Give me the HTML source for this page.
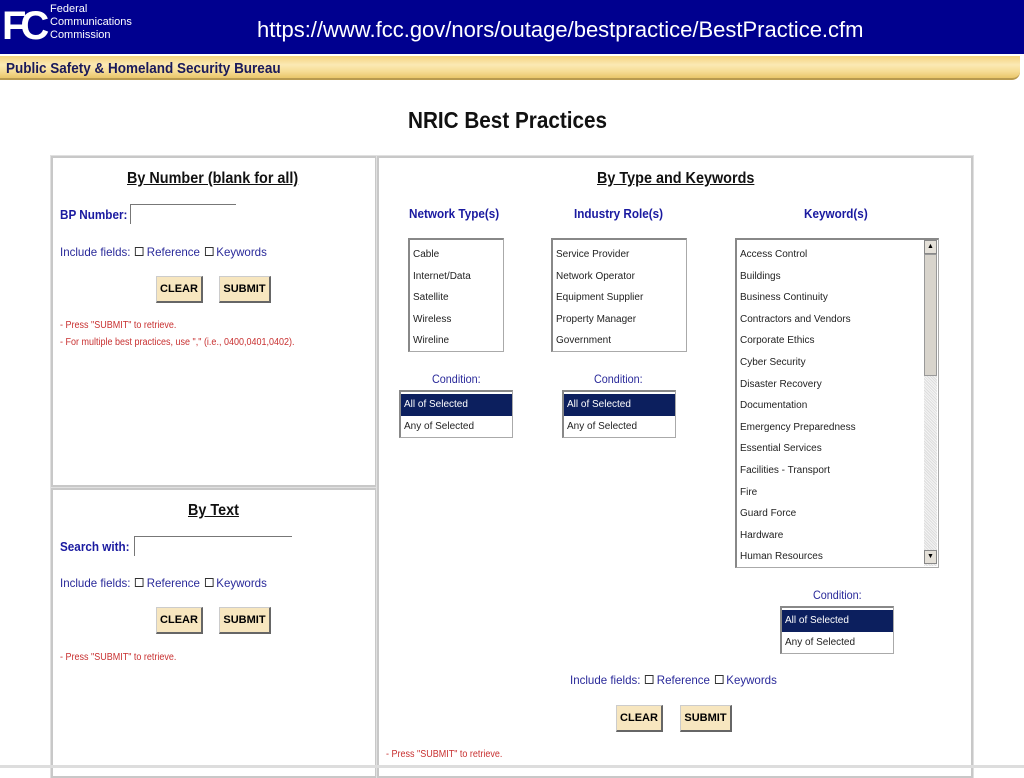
<!DOCTYPE html>
<html><head><meta charset="utf-8"><style>
*{margin:0;padding:0;box-sizing:border-box}
body{width:1024px;height:768px;position:relative;background:#fff;font-family:"Liberation Sans",sans-serif;overflow:hidden}
.a{position:absolute;white-space:nowrap}
.n{transform:scaleX(.9);transform-origin:0 0}
.hdr{left:0;top:0;width:1024px;height:54px;background:#00008f}
.gold{left:0;top:56px;width:1020px;height:24px;background:linear-gradient(#f4d37e,#fbe9b4 40%,#f6dc95 70%,#e9c66a);border-bottom:2px solid #b89a50;border-radius:0 0 8px 0}
.box{border:2px solid #c8c8c8;outline:1px solid #e0e0e0}
.h{font-weight:bold;font-size:16px;text-decoration:underline;color:#111}
.blu{color:#2a2a9a;font-size:12px}
.lbl{color:#1a1aa0;font-weight:bold;font-size:13px}
.red{color:#c83030;font-size:10px;line-height:17px}
.btn{background:#f7e6bf;border:1px solid #ccc;border-right:2px solid #666;border-bottom:2px solid #666;font-weight:bold;font-size:11px;text-align:center;line-height:24px;height:27px}
.inp{border-top:1px solid #777;border-left:1px solid #777;height:20px}
.list{border:1px solid #aaa;border-top:2px solid #888;border-left:2px solid #888;font-size:10px;color:#222}
.list div{height:21.6px;line-height:21.6px;padding-left:3px}
.sel{background:#0c1f5e;color:#fff}
.cb{display:inline-block;width:9px;height:9px;border:1px solid #333;margin:0 3px 0 5px;vertical-align:0}
</style></head><body>
<div class="a hdr"></div>
<div class="a" style="left:2px;top:6px;color:#fff;font-size:40px;font-weight:bold;letter-spacing:-6px;line-height:40px">FC</div>
<div class="a" style="left:50px;top:3px;color:#fff;font-size:11px;line-height:13px" class="n">Federal<br>Communications<br>Commission</div>
<div class="a" style="left:257px;top:17px;color:#fff;font-size:22px">https://www.fcc.gov/nors/outage/bestpractice/BestPractice.cfm</div>
<div class="a gold"></div>
<div class="a n" style="left:6px;top:60px;color:#1a1a5a;font-weight:bold;font-size:15px">Public Safety &amp; Homeland Security Bureau</div>
<div class="a n" style="left:408px;top:107px;font-weight:bold;font-size:23px;color:#111">NRIC Best Practices</div>

<div class="a box" style="left:51px;top:156px;width:326px;height:331px"></div>
<div class="a box" style="left:51px;top:488px;width:326px;height:290px"></div>
<div class="a box" style="left:377px;top:156px;width:596px;height:622px"></div>

<div class="a h n" style="left:127px;top:170px">By Number (blank for all)</div>
<div class="a lbl n" style="left:60px;top:207px">BP Number:</div>
<div class="a inp" style="left:130px;top:204px;width:106px"></div>
<div class="a blu n" style="left:60px;top:245px;transform:scaleX(.96)">Include fields:<span class="cb"></span>Reference<span class="cb"></span>Keywords</div>
<div class="a btn" style="left:156px;top:276px;width:47px">CLEAR</div>
<div class="a btn" style="left:219px;top:276px;width:52px">SUBMIT</div>
<div class="a red n" style="left:60px;top:317px">- Press "SUBMIT" to retrieve.<br>- For multiple best practices, use "," (i.e., 0400,0401,0402).</div>

<div class="a h n" style="left:188px;top:502px">By Text</div>
<div class="a lbl n" style="left:60px;top:539px">Search with:</div>
<div class="a inp" style="left:134px;top:536px;width:158px"></div>
<div class="a blu n" style="left:60px;top:576px;transform:scaleX(.96)">Include fields:<span class="cb"></span>Reference<span class="cb"></span>Keywords</div>
<div class="a btn" style="left:156px;top:607px;width:47px">CLEAR</div>
<div class="a btn" style="left:219px;top:607px;width:52px">SUBMIT</div>
<div class="a red n" style="left:60px;top:649px">- Press "SUBMIT" to retrieve.</div>

<div class="a h n" style="left:597px;top:170px">By Type and Keywords</div>
<div class="a lbl n" style="left:409px;top:206px">Network Type(s)</div>
<div class="a lbl n" style="left:574px;top:206px">Industry Role(s)</div>
<div class="a lbl n" style="left:804px;top:206px">Keyword(s)</div>
<div class="a list" style="left:408px;top:238px;width:96px;height:114px;padding-top:4px"><div>Cable</div><div>Internet/Data</div><div>Satellite</div><div>Wireless</div><div>Wireline</div></div>
<div class="a list" style="left:551px;top:238px;width:136px;height:114px;padding-top:4px"><div>Service Provider</div><div>Network Operator</div><div>Equipment Supplier</div><div>Property Manager</div><div>Government</div></div>
<div class="a list" style="left:735px;top:238px;width:204px;height:330px;padding-top:4px;overflow:hidden"><div>Access Control</div><div>Buildings</div><div>Business Continuity</div><div>Contractors and Vendors</div><div>Corporate Ethics</div><div>Cyber Security</div><div>Disaster Recovery</div><div>Documentation</div><div>Emergency Preparedness</div><div>Essential Services</div><div>Facilities - Transport</div><div>Fire</div><div>Guard Force</div><div>Hardware</div><div>Human Resources</div></div>
<div class="a" style="left:924px;top:240px;width:13px;height:326px;background:repeating-linear-gradient(45deg,#ddd 0 1px,#f4f4f4 1px 2px)"></div>
<div class="a" style="left:924px;top:254px;width:13px;height:122px;background:#d8d4cc;border:1px solid #999"></div>
<div class="a" style="left:924px;top:240px;width:13px;height:14px;background:#e4e0d8;border:1px solid #888;font-size:7px;text-align:center;line-height:12px">▲</div>
<div class="a" style="left:924px;top:550px;width:13px;height:14px;background:#e4e0d8;border:1px solid #888;font-size:7px;text-align:center;line-height:12px">▼</div>

<div class="a blu n" style="left:432px;top:372px">Condition:</div>
<div class="a blu n" style="left:594px;top:372px">Condition:</div>
<div class="a blu n" style="left:813px;top:588px">Condition:</div>
<div class="a list" style="left:399px;top:390px;width:114px;height:48px;padding-top:2px"><div class="sel">All of Selected</div><div>Any of Selected</div></div>
<div class="a list" style="left:562px;top:390px;width:114px;height:48px;padding-top:2px"><div class="sel">All of Selected</div><div>Any of Selected</div></div>
<div class="a list" style="left:780px;top:606px;width:114px;height:48px;padding-top:2px"><div class="sel">All of Selected</div><div>Any of Selected</div></div>

<div class="a blu n" style="left:570px;top:673px;transform:scaleX(.96)">Include fields:<span class="cb"></span>Reference<span class="cb"></span>Keywords</div>
<div class="a btn" style="left:616px;top:705px;width:47px">CLEAR</div>
<div class="a btn" style="left:680px;top:705px;width:52px">SUBMIT</div>
<div class="a red n" style="left:386px;top:746px">- Press "SUBMIT" to retrieve.</div>
<div class="a" style="left:0;top:765px;width:1024px;height:3px;background:#ddd"></div>
</body></html>
